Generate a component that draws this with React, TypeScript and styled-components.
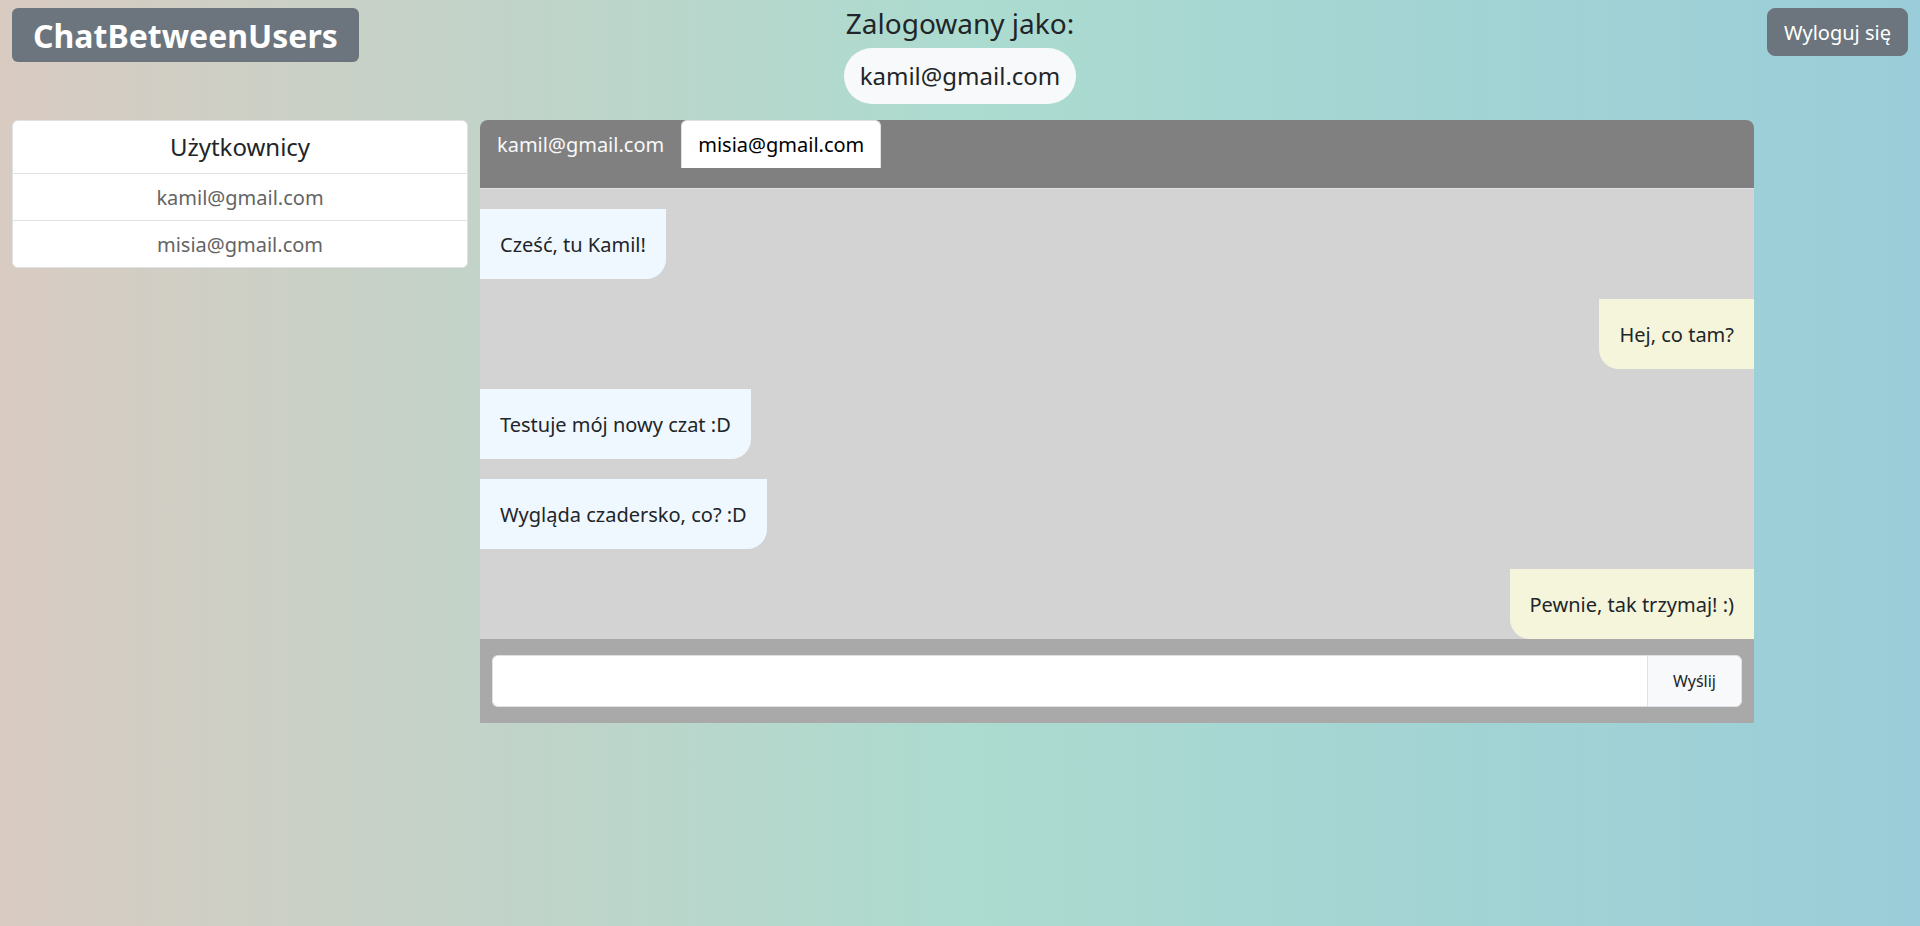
import React, { useState } from 'react';
import styled, { createGlobalStyle } from 'styled-components';

const GlobalStyle = createGlobalStyle`
  *, *::before, *::after { box-sizing: border-box; }
  body {
    margin: 0;
    min-height: 100vh;
    color: #212529;
    font: 400 20px/30px "Noto Sans", "Liberation Sans", sans-serif;
    background: linear-gradient(to right, #d9cbc2 0%, #acdbcf 50%, #9acdd9 100%);
  }
  button, input { font-family: inherit; color: inherit; }
`;

const Header = styled.header`
  display: grid;
  grid-template-columns: 1fr auto 1fr;
  align-items: start;
  padding: 0 12px 16px;
`;

const Brand = styled.h1`
  justify-self: start;
  margin: 8px 0 0;
  padding: 12px 21px 10px;
  border-radius: 6px;
  background: #6c757d;
  color: #fff;
  font-size: 32px;
  line-height: 32px;
  font-weight: 700;
`;

const Session = styled.div`
  display: flex;
  flex-direction: column;
  align-items: center;
  gap: 8px;
  padding-top: 6px;
`;

const SessionLabel = styled.div`
  font-size: 28px;
  line-height: 34px;
`;

const SessionUser = styled.div`
  padding: 16px;
  border-radius: 28px;
  background: #f8f9fa;
  font-size: 24px;
  line-height: 24px;
`;

const LogoutButton = styled.button`
  justify-self: end;
  margin: 8px 0 0;
  padding: 9px 16px 7px;
  border: 1px solid #6c757d;
  border-radius: 8px;
  background: #6c757d;
  color: #fff;
  font-size: 20px;
  line-height: 30px;
  cursor: pointer;
`;

const Main = styled.main`
  display: grid;
  grid-template-columns: 25% 1fr;
  align-items: start;
`;

const UserPanel = styled.aside`
  margin: 0 12px;
  border: 1px solid #dee2e6;
  border-radius: 6px;
  background: #fff;
  overflow: hidden;
  text-align: center;
`;

const UserPanelTitle = styled.h2`
  margin: 0;
  padding: 8px 16px;
  font-size: 24px;
  line-height: 36px;
  font-weight: 400;
`;

const UserList = styled.ul`
  margin: 0;
  padding: 0;
  list-style: none;
`;

const UserItem = styled.li`
  border-top: 1px solid #dee2e6;
`;

const UserButton = styled.button`
  display: block;
  width: 100%;
  padding: 9px 16px 7px;
  border: 0;
  background: #fff;
  color: #636464;
  font-size: 20px;
  line-height: 30px;
  cursor: pointer;
`;

const Chat = styled.section`
  margin-right: 166px;
  border-radius: 8px 8px 0 0;
  overflow: hidden;
`;

const Tabs = styled.div`
  display: flex;
  align-items: flex-start;
  padding-bottom: 20px;
  border-bottom: 1px solid #dee2e6;
  background: #808080;
`;

const Tab = styled.button<{ $active: boolean }>`
  padding: 9px 16px 7px;
  border: 1px solid ${({ $active }) => ($active ? '#dee2e6' : 'transparent')};
  border-bottom-color: ${({ $active }) => ($active ? '#fff' : 'transparent')};
  border-radius: 6px 6px 0 0;
  background: ${({ $active }) => ($active ? '#fff' : 'transparent')};
  color: ${({ $active }) => ($active ? '#000' : '#f8f9fa')};
  font-size: 20px;
  line-height: 30px;
  cursor: pointer;
`;

const Messages = styled.div`
  display: flex;
  flex-direction: column;
  gap: 20px;
  padding-top: 20px;
  background: #d3d3d3;
`;

const Message = styled.div<{ $own: boolean }>`
  align-self: ${({ $own }) => ($own ? 'flex-start' : 'flex-end')};
  padding: 21px 20px 19px;
  border-radius: ${({ $own }) => ($own ? '0 0 20px 0' : '0 0 0 20px')};
  background: ${({ $own }) => ($own ? '#f0f8ff' : '#f5f5dc')};
`;

const Composer = styled.form`
  display: flex;
  padding: 16px 12px;
  background: #a9a9a9;
`;

const MessageInput = styled.input`
  flex: 1;
  min-width: 0;
  height: 52px;
  padding: 8px 16px;
  border: 1px solid #dee2e6;
  border-right: 0;
  border-radius: 6px 0 0 6px;
  background: #fff;
  font-size: 20px;
`;

const SendButton = styled.button`
  padding: 0 25px;
  border: 1px solid #dee2e6;
  border-radius: 0 6px 6px 0;
  background: #f8f9fa;
  font-size: 16px;
  line-height: 24px;
  cursor: pointer;
`;

const users = ['kamil@gmail.com', 'misia@gmail.com'];

const conversation = [
  { own: true, text: 'Cześć, tu Kamil!' },
  { own: false, text: 'Hej, co tam?' },
  { own: true, text: 'Testuje mój nowy czat :D' },
  { own: true, text: 'Wygląda czadersko, co? :D' },
  { own: false, text: 'Pewnie, tak trzymaj! :)' },
];

export default function App() {
  const [active, setActive] = useState(users[1]);
  const [messages, setMessages] = useState(conversation);
  const [draft, setDraft] = useState('');

  const send = (event: React.FormEvent) => {
    event.preventDefault();
    if (!draft.trim()) return;
    setMessages([...messages, { own: true, text: draft }]);
    setDraft('');
  };

  return (
    <>
      <GlobalStyle />
      <Header>
        <Brand>ChatBetweenUsers</Brand>
        <Session>
          <SessionLabel>Zalogowany jako:</SessionLabel>
          <SessionUser>{users[0]}</SessionUser>
        </Session>
        <LogoutButton type="button">Wyloguj się</LogoutButton>
      </Header>
      <Main>
        <UserPanel>
          <UserPanelTitle>Użytkownicy</UserPanelTitle>
          <UserList>
            {users.map((user) => (
              <UserItem key={user}>
                <UserButton type="button" onClick={() => setActive(user)}>{user}</UserButton>
              </UserItem>
            ))}
          </UserList>
        </UserPanel>
        <Chat>
          <Tabs role="tablist">
            {users.map((user) => (
              <Tab
                key={user}
                type="button"
                role="tab"
                aria-selected={user === active}
                $active={user === active}
                onClick={() => setActive(user)}
              >
                {user}
              </Tab>
            ))}
          </Tabs>
          <Messages>
            {messages.map((message, index) => (
              <Message key={index} $own={message.own}>{message.text}</Message>
            ))}
          </Messages>
          <Composer onSubmit={send}>
            <MessageInput
              type="text"
              aria-label="Wiadomość"
              value={draft}
              onChange={(event) => setDraft(event.target.value)}
            />
            <SendButton type="submit">Wyślij</SendButton>
          </Composer>
        </Chat>
      </Main>
    </>
  );
}
